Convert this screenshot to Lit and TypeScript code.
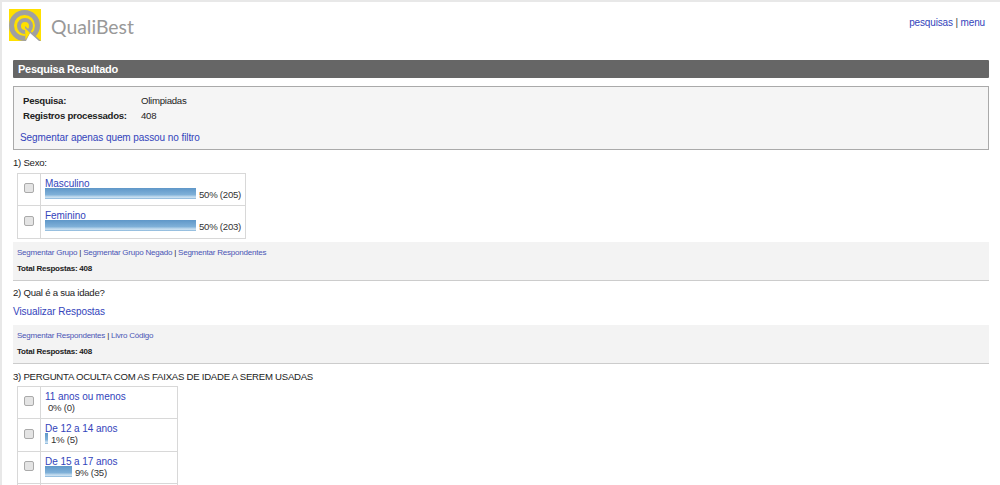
import { LitElement, html, css } from "lit";
import { customElement } from "lit/decorators.js";

type Opt = { label: string; w: number; text: string };

@customElement("app-root")
export class AppRoot extends LitElement {
  static styles = css`
    :host { display: block; font-family: "Liberation Sans", Arial, sans-serif; font-size: 9.6px; letter-spacing: -0.25px; color: #222; height: 485px; overflow: hidden; background: #fff; border-top: 2px solid #e8e8e8; border-left: 2px solid #e8e8e8; box-sizing: border-box; }
    a { color: #3344bb; text-decoration: none; }
    .top { display: flex; justify-content: space-between; height: 58px; padding: 7px 15px 0 7px; box-sizing: border-box; }
    .brand { display: flex; align-items: flex-start; gap: 10px; }
    .brand svg { display: block; }
    .name { font-family: Lato, "Liberation Sans", sans-serif; font-size: 19.4px; line-height: 36px; color: #999; letter-spacing: 0; }
    .nav { font-size: 10px; letter-spacing: -0.15px; padding-top: 8px; line-height: 12px; color: #444; }
    .main { margin: 0 11px 0 11px; }
    .title { background: #666; color: #fff; font-weight: bold; font-size: 11px; letter-spacing: -0.25px; height: 18px; line-height: 18px; padding-left: 5px; border-radius: 1px; }
    .info { margin-top: 8px; height: 64px; box-sizing: border-box; background: #f5f5f5; border: 1px solid #aaa; padding: 6px 9px 0 6px; }
    .row { display: flex; height: 15px; line-height: 15px; padding-left: 3px; }
    .row b { width: 118px; flex: none; }
    .seg { display: block; margin-top: 8px; font-size: 10px; letter-spacing: -0.08px; line-height: 14px; }
    .q { line-height: 14px; height: 14px; }
    .q1 { margin-top: 6px; }
    .q2 { margin-top: 5px; }
    .q3 { margin-top: 6px; }
    table { border-collapse: collapse; margin: 3px 0 0 4px; }
    table.wide { width: 161px; margin-top: 2px; }
    td { border: 1px solid #d8d8d8; padding: 0; height: 31px; vertical-align: top; }
    tr:nth-child(even) td { height: 32px; }
    td.c { width: 22px; text-align: center; vertical-align: top; }
    .box { display: block; width: 8px; height: 8px; margin: 9px auto 0; border: 1px solid #aaa; border-radius: 2px; background: #e4e4e4; }
    tr:nth-child(even) .box { margin-top: 10px; }
    td.o { padding: 0 4px; }
    .lab { display: block; font-size: 10px; letter-spacing: -0.06px; line-height: 13px; height: 11px; margin-top: 3px; }
    .res { display: flex; align-items: flex-end; height: 13px; line-height: 12px; color: #333; }
    .bar { align-self: flex-start; height: 11px; margin-right: 3px; background: linear-gradient(#5f97c8, #7fb0d8 60%, #cfe3f2 85%, #7fb0d8); }
    .gap { width: 3px; }
    .foot { margin-top: 3px; background: #f3f3f3; border-bottom: 1px solid #ccc; height: 39px; padding: 0 4px; box-sizing: border-box; font-size: 8px; letter-spacing: -0.22px; }
    .foot .links { padding-top: 6px; line-height: 10px; }
    .foot .links a { color: #4a55b5; }
    .foot .tot { margin-top: 6px; line-height: 10px; font-weight: bold; color: #222; }
    .vis { display: block; font-size: 10px; letter-spacing: -0.06px; line-height: 14px; margin-top: 5px; }
    .foot.f2 { margin-top: 6px; }
  `;

  private table(opts: Opt[], wide = false) {
    return html`<table class=${wide ? "wide" : ""}>${opts.map(
      (o) => html`<tr>
        <td class="c"><span class="box"></span></td>
        <td class="o">
          <a class="lab" href="#">${o.label}</a>
          <div class="res">${o.w > 0 ? html`<div class="bar" style="width:${o.w}px"></div>` : html`<span class="gap"></span>`}<span>${o.text}</span></div>
        </td>
      </tr>`
    )}</table>`;
  }

  render() {
    return html`
      <div class="top">
        <div class="brand">
          <svg width="32" height="32" viewBox="0 0 32 32">
            <rect width="32" height="32" fill="#ffe000"/>
            <circle cx="15.5" cy="16.500" r="13" fill="none" stroke="#a0a0a0" stroke-width="5"/>
            <circle cx="16" cy="17" r="6" fill="none" stroke="#a0a0a0" stroke-width="4"/>
            <path d="M16 17 L32 32 L16 32 Z" fill="#a0a0a0"/>
            <path d="M17 32 L21 24 L30 32 Z" fill="#fff"/>
            <path d="M16 19 L21 24 L16.500 31 Z" fill="#ffe000"/>
          </svg>
          <div class="name">QualiBest</div>
        </div>
        <div class="nav"><a href="#">pesquisas</a> | <a href="#">menu</a></div>
      </div>
      <div class="main">
        <div class="title">Pesquisa Resultado</div>
        <div class="info">
          <div class="row"><b>Pesquisa:</b><span>Olimpiadas</span></div>
          <div class="row"><b>Registros processados:</b><span>408</span></div>
          <a class="seg" href="#">Segmentar apenas quem passou no filtro</a>
        </div>
        <div class="q q1">1) Sexo:</div>
        ${this.table([
          { label: "Masculino", w: 151, text: "50% (205)" },
          { label: "Feminino", w: 151, text: "50% (203)" },
        ])}
        <div class="foot">
          <div class="links"><a href="#">Segmentar Grupo</a> | <a href="#">Segmentar Grupo Negado</a> | <a href="#">Segmentar Respondentes</a></div>
          <div class="tot">Total Respostas: 408</div>
        </div>
        <div class="q q2">2) Qual é a sua idade?</div>
        <a class="vis" href="#">Visualizar Respostas</a>
        <div class="foot f2">
          <div class="links"><a href="#">Segmentar Respondentes</a> | <a href="#">Livro Código</a></div>
          <div class="tot">Total Respostas: 408</div>
        </div>
        <div class="q q3">3) PERGUNTA OCULTA COM AS FAIXAS DE IDADE A SEREM USADAS</div>
        ${this.table([
          { label: "11 anos ou menos", w: 0, text: "0% (0)" },
          { label: "De 12 a 14 anos", w: 3, text: "1% (5)" },
          { label: "De 15 a 17 anos", w: 27, text: "9% (35)" },
          { label: "", w: 0, text: "" },
        ], true)}
      </div>
    `;
  }
}
